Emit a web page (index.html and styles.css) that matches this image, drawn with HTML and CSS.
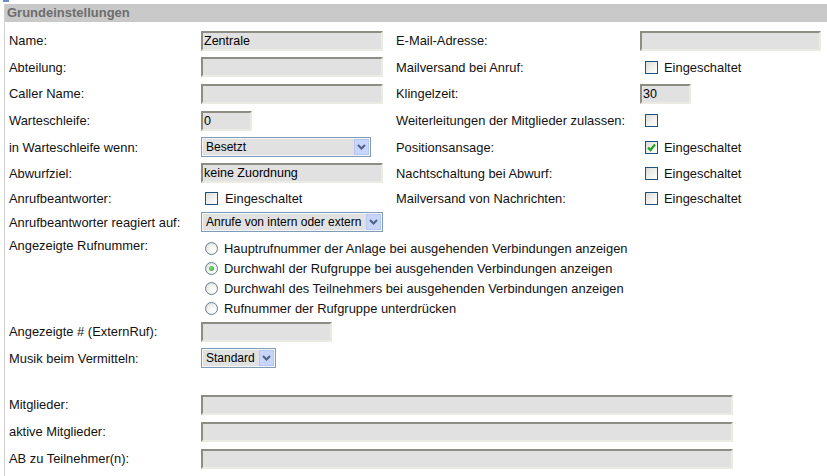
FILE: index.html
```html
<!DOCTYPE html>
<html lang="de">
<head>
<meta charset="utf-8">
<title>Grundeinstellungen</title>
<link rel="stylesheet" href="styles.css">
</head>
<body>
<div class="top"><span class="mark"></span></div>
<div class="panel">
  <div class="head">Grundeinstellungen</div>
  <div class="body">
    <div class="row">
      <div class="lbl">Name:</div>
      <div class="fld"><input class="inp w182" type="text" value="Zentrale" readonly></div>
      <div class="lbl2">E-Mail-Adresse:</div>
      <div class="fld"><input class="inp w181" type="text" value="" readonly></div>
    </div>
    <div class="row h26">
      <div class="lbl">Abteilung:</div>
      <div class="fld"><input class="inp w182" type="text" value="" readonly></div>
      <div class="lbl2">Mailversand bei Anruf:</div>
      <div class="fld chk r"><span class="cb"></span><span>Eingeschaltet</span></div>
    </div>
    <div class="row">
      <div class="lbl">Caller Name:</div>
      <div class="fld"><input class="inp w182" type="text" value="" readonly></div>
      <div class="lbl2">Klingelzeit:</div>
      <div class="fld"><input class="inp w51" type="text" value="30" readonly></div>
    </div>
    <div class="row">
      <div class="lbl">Warteschleife:</div>
      <div class="fld"><input class="inp w51" type="text" value="0" readonly></div>
      <div class="lbl2">Weiterleitungen der Mitglieder zulassen:</div>
      <div class="fld chk r"><span class="cb"></span></div>
    </div>
    <div class="row h26">
      <div class="lbl">in Warteschleife wenn:</div>
      <div class="fld"><div class="sel w170"><span class="txt">Besetzt</span><span class="arr"><svg width="9" height="6" viewBox="0 0 9 6"><polyline points="1,1 4.5,4.5 8,1" fill="none" stroke="#4d6185" stroke-width="2"/></svg></span></div></div>
      <div class="lbl2">Positionsansage:</div>
      <div class="fld chk r"><span class="cb"><svg width="11" height="11" viewBox="0 0 11 11"><polyline points="2,5.5 4.5,8 9,2.5" fill="none" stroke="#21a121" stroke-width="2.2"/></svg></span><span>Eingeschaltet</span></div>
    </div>
    <div class="row h26">
      <div class="lbl">Abwurfziel:</div>
      <div class="fld"><input class="inp w182" type="text" value="keine Zuordnung" readonly></div>
      <div class="lbl2">Nachtschaltung bei Abwurf:</div>
      <div class="fld chk r"><span class="cb"></span><span>Eingeschaltet</span></div>
    </div>
    <div class="row h24">
      <div class="lbl">Anrufbeantworter:</div>
      <div class="fld chk"><span class="cb"></span><span>Eingeschaltet</span></div>
      <div class="lbl2">Mailversand von Nachrichten:</div>
      <div class="fld chk r"><span class="cb"></span><span>Eingeschaltet</span></div>
    </div>
    <div class="row h24">
      <div class="lbl">Anrufbeantworter reagiert auf:</div>
      <div class="fld"><div class="sel w182"><span class="txt">Anrufe von intern oder extern</span><span class="arr"><svg width="9" height="6" viewBox="0 0 9 6"><polyline points="1,1 4.5,4.5 8,1" fill="none" stroke="#4d6185" stroke-width="2"/></svg></span></div></div>
    </div>
    <div class="row radios">
      <div class="lbl top">Angezeigte Rufnummer:</div>
      <div class="rlist">
        <div class="ropt"><span class="rb"></span><span>Hauptrufnummer der Anlage bei ausgehenden Verbindungen anzeigen</span></div>
        <div class="ropt"><span class="rb on"></span><span>Durchwahl der Rufgruppe bei ausgehenden Verbindungen anzeigen</span></div>
        <div class="ropt"><span class="rb"></span><span>Durchwahl des Teilnehmers bei ausgehenden Verbindungen anzeigen</span></div>
        <div class="ropt"><span class="rb"></span><span>Rufnummer der Rufgruppe unterdrücken</span></div>
      </div>
    </div>
    <div class="row">
      <div class="lbl">Angezeigte # (ExternRuf):</div>
      <div class="fld"><input class="inp w131" type="text" value="" readonly></div>
    </div>
    <div class="row h26">
      <div class="lbl">Musik beim Vermitteln:</div>
      <div class="fld"><div class="sel w75"><span class="txt">Standard</span><span class="arr"><svg width="9" height="6" viewBox="0 0 9 6"><polyline points="1,1 4.5,4.5 8,1" fill="none" stroke="#4d6185" stroke-width="2"/></svg></span></div></div>
    </div>
    <div class="spacer"></div>
    <div class="row">
      <div class="lbl">Mitglieder:</div>
      <div class="wide"><input class="inp w532" type="text" value="" readonly></div>
    </div>
    <div class="row">
      <div class="lbl">aktive Mitglieder:</div>
      <div class="wide"><input class="inp w532" type="text" value="" readonly></div>
    </div>
    <div class="row">
      <div class="lbl">AB zu Teilnehmer(n):</div>
      <div class="wide"><input class="inp w532" type="text" value="" readonly></div>
    </div>
  </div>
</div>
</body>
</html>
```
FILE: styles.css
```css
body {
  margin: 0;
  font-family: "Liberation Sans", Arial, sans-serif;
  font-size: 12.9px;
  color: #111;
  background: #fff;
}
.top {
  height: 4px;
  padding-left: 3px;
}
.top .mark {
  display: block;
  width: 6px;
  height: 2px;
  background: #6c8fc6;
}
.panel {
  margin-left: 4px;
  border-left: 1px solid #d2d2d2;
}
.head {
  height: 18px;
  line-height: 18px;
  background: #c9c9c9;
  color: #6d6d6d;
  font-weight: bold;
  font-size: 13px;
  padding-left: 2px;
}
.body {
  padding-top: 5px;
  padding-bottom: 4px;
}
.row {
  display: grid;
  grid-template-columns: 196px 195px 244px 1fr;
  align-items: center;
  height: 27px;
}
.row.h26 { height: 26px; }
.row.h24 { height: 24px; }
.lbl {
  padding-left: 4px;
}
.lbl.top {
  align-self: start;
  padding-top: 4px;
}
.fld {
  display: flex;
  align-items: center;
}
.inp {
  box-sizing: border-box;
  display: block;
  height: 20px;
  margin: 0;
  border: 2px solid;
  border-color: #8d8d85 #ecebe3 #ecebe3 #8d8d85;
  background: #e1e1e1;
  font-family: inherit;
  font-size: 12.5px;
  color: #000;
  padding: 0 1px;
  outline: none;
}
.w182 { width: 182px; }
.w181 { width: 181px; }
.w170 { width: 170px; }
.w131 { width: 131px; }
.w75 { width: 75px; }
.w51 { width: 51px; }
.w532 { width: 532px; }
.sel {
  box-sizing: border-box;
  display: flex;
  align-items: center;
  height: 20px;
  border: 1px solid #7f9db9;
  background: #e1e1e1;
  box-shadow: inset 0 0 0 1px #f4f4f4;
  color: #000;
  font-size: 12px;
}
.sel .txt {
  flex: 1;
  padding-left: 4px;
  white-space: nowrap;
  overflow: hidden;
}
.sel .arr {
  box-sizing: border-box;
  width: 15px;
  height: 16px;
  margin-right: 1px;
  background: #c6d5f9;
  border: 1px solid #b5c7ef;
  display: flex;
  align-items: center;
  justify-content: center;
  flex: none;
}
.chk {
  gap: 7px;
  padding-left: 4px;
}
.chk.r {
  padding-left: 5px;
  gap: 6px;
}
.cb {
  box-sizing: border-box;
  width: 13px;
  height: 13px;
  border: 1px solid #1c5180;
  background: linear-gradient(135deg, #dcdcd7 0%, #f6f6f4 70%, #fff 100%);
  display: flex;
  align-items: center;
  justify-content: center;
  flex: none;
}
.row.radios {
  height: 84px;
  align-items: start;
}
.rlist {
  grid-column: 2 / 5;
  padding-top: 4px;
}
.ropt {
  height: 20px;
  display: flex;
  align-items: center;
  gap: 6px;
  padding-left: 4px;
}
.rb {
  box-sizing: border-box;
  width: 13px;
  height: 13px;
  border-radius: 50%;
  border: 1px solid #6b7d93;
  background: radial-gradient(circle at 65% 65%, #fff 0%, #f2f2ef 45%, #d6d6d0 100%);
  display: flex;
  align-items: center;
  justify-content: center;
  flex: none;
}
.rb.on::after {
  content: "";
  width: 5px;
  height: 5px;
  border-radius: 50%;
  background: radial-gradient(circle at 40% 40%, #7ae07a, #21a121);
}
.spacer {
  height: 20px;
}
.wide {
  grid-column: 2 / 5;
}
```
